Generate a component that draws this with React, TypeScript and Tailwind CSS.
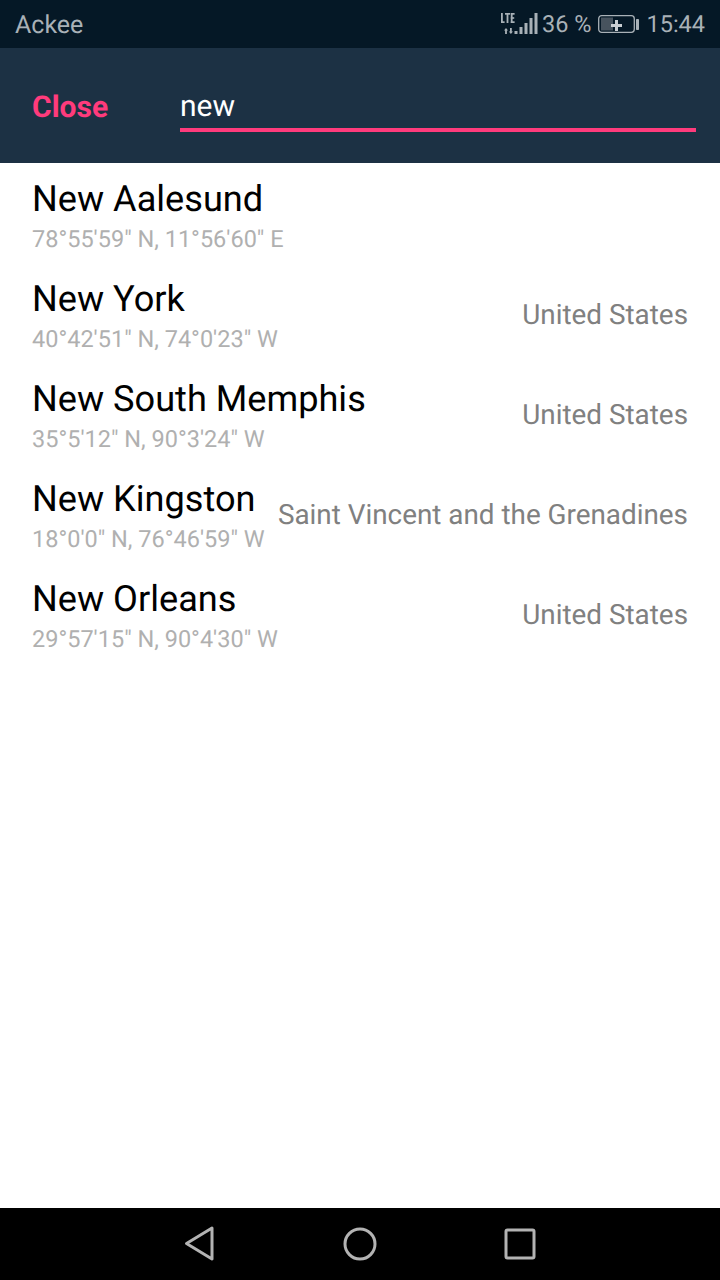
const results = [
  { name: "New Aalesund", coords: `78°55'59" N, 11°56'60" E`, country: "" },
  { name: "New York", coords: `40°42'51" N, 74°0'23" W`, country: "United States" },
  { name: "New South Memphis", coords: `35°5'12" N, 90°3'24" W`, country: "United States" },
  { name: "New Kingston", coords: `18°0'0" N, 76°46'59" W`, country: "Saint Vincent and the Grenadines" },
  { name: "New Orleans", coords: `29°57'15" N, 90°4'30" W`, country: "United States" },
];

const StatusIcons = () => (
  <div className="flex items-center">
    <svg width="40" height="24" viewBox="0 0 40 24" className="text-[#a9b1b7]">
      <g fill="currentColor">
        {/* LTE */}
        <rect x="2" y="1" width="1.8" height="10" />
        <rect x="2" y="9.3" width="3.6" height="1.7" />
        <rect x="6" y="1" width="5" height="1.7" />
        <rect x="7.6" y="1" width="1.8" height="10" />
        <rect x="11.8" y="1" width="1.8" height="10" />
        <rect x="11.8" y="1" width="3.8" height="1.7" />
        <rect x="11.8" y="5.2" width="3.4" height="1.6" />
        <rect x="11.8" y="9.3" width="3.8" height="1.7" />
        {/* data arrows */}
        <path d="M7 16 L9 18.5 H7.9 V22 H6.1 V18.5 H5 Z" />
        <path d="M11 16 H12.8 V19.5 H14 L11.9 22 L9.8 19.5 H11 Z" />
        <rect x="15.5" y="19" width="3" height="3" />
        {/* signal */}
        <rect x="20.5" y="15" width="3" height="7" />
        <rect x="25.5" y="11" width="3" height="11" />
        <rect x="30.5" y="6" width="3" height="16" />
        <rect x="35.5" y="1" width="3" height="21" />
      </g>
    </svg>
    <span className="ml-[3px] pt-[2px] text-[23.5px] text-[#a9b1b7]">36 %</span>
    <svg width="42" height="20" viewBox="0 0 42 20" className="ml-[7px] text-[#a9b1b7]">
      <rect x="0.7" y="1.7" width="35.6" height="16.6" rx="3" fill="none" stroke="currentColor" strokeWidth="1.3" />
      <rect x="3" y="3.5" width="12" height="13" fill="#47535e" />
      <rect x="13" y="10" width="11" height="3" fill="#c9ced2" />
      <rect x="17" y="6" width="3" height="11" fill="#c9ced2" />
      <rect x="38" y="5" width="3" height="11" rx="0.8" fill="currentColor" />
    </svg>
    <span className="ml-[6px] pt-[2px] text-[23.5px] text-[#a9b1b7]">15:44</span>
  </div>
);

const NavBar = () => (
  <div className="flex h-[72px] items-center justify-center gap-[104px] bg-black">
    <svg width="56" height="40" viewBox="0 0 56 40" fill="none" stroke="#b3b3b3" strokeWidth="3" strokeLinejoin="round">
      <path d="M40 4 L14.5 19.5 L40 35 Z" />
    </svg>
    <svg width="56" height="40" viewBox="0 0 56 40" fill="none" stroke="#b3b3b3" strokeWidth="3">
      <circle cx="28" cy="20" r="15" />
    </svg>
    <svg width="56" height="40" viewBox="0 0 56 40" fill="none" stroke="#b3b3b3" strokeWidth="3" strokeLinejoin="round">
      <rect x="14" y="6" width="28" height="28" rx="1.5" />
    </svg>
  </div>
);

export default function App() {
  return (
    <div className="flex h-[1280px] w-[720px] flex-col overflow-hidden bg-white font-['Roboto',sans-serif] opacity-[0.999] [text-rendering:geometricPrecision]">
      <div className="flex h-12 items-center justify-between bg-[#051826] pr-[15px] pl-[15px]">
        <span className="pt-[3px] text-[25px] text-[#a9b1b7]">Ackee</span>
        <StatusIcons />
      </div>

      <div className="flex h-[115px] bg-[#1c3144] pr-6 pl-8">
        <div className="w-[148px] pt-[40px] text-[30px] leading-[40px] font-bold text-[#ff3b7c]">Close</div>
        <div className="mt-[37px] h-[47px] flex-1 border-b-4 border-[#ff3b7c] pt-[2px] text-[30px] leading-[40px] text-white">new</div>
      </div>

      <div className="flex-1">
        {results.map((r) => (
          <div key={r.name} className="flex h-[100px] items-center justify-between pr-8 pl-8">
            <div className="pt-[6px]">
              <div className="text-[36.15px] leading-[44px] text-black">{r.name}</div>
              <div className="mt-[2px] text-[23.5px] leading-[32px] text-[#b0b0b0]">{r.coords}</div>
            </div>
            {r.country && <div className="pt-[4px] text-[27.85px] text-[#808080]">{r.country}</div>}
          </div>
        ))}
      </div>

      <NavBar />
    </div>
  );
}
